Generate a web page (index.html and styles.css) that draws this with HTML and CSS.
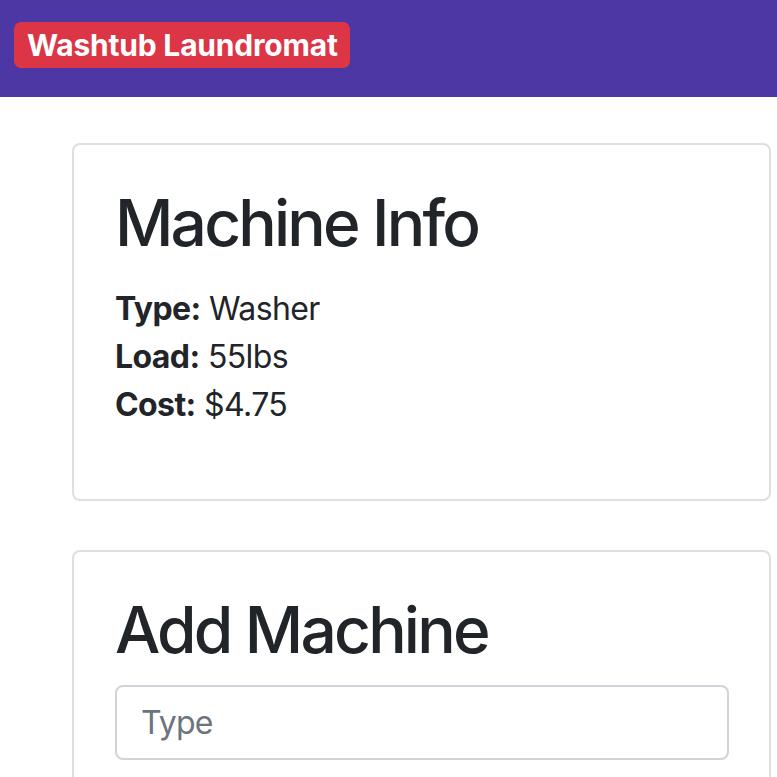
FILE: index.html
```html
<!DOCTYPE html>
<html>
<head>
<meta charset="utf-8">
<link rel="stylesheet" href="styles.css">
</head>
<body>
<nav class="navbar">
  <span class="brand">Washtub Laundromat</span>
</nav>
<main class="main">
  <section class="card">
    <h1 class="title">Machine Info</h1>
    <p class="info">
      <span class="row"><b>Type:</b> Washer</span>
      <span class="row"><b>Load:</b> 55lbs</span>
      <span class="row"><b>Cost:</b> $4.75</span>
    </p>
  </section>
  <section class="card">
    <h1 class="title">Add Machine</h1>
    <input class="field" type="text" placeholder="Type">
  </section>
</main>
</body>
</html>
```
FILE: styles.css
```css
* { box-sizing: border-box; }
html, body { margin: 0; padding: 0; }
body {
  font-family: Inter, "Noto Sans", sans-serif;
  color: #212529;
  background: #fff;
  font-size: 32px;
  line-height: 1.5;
  overflow: hidden;
}
.navbar {
  height: 97px;
  background: #4c37a5;
  display: flex;
  align-items: flex-start;
  padding: 22px 14px 0;
}
.brand {
  display: inline-flex;
  align-items: center;
  height: 46px;
  padding: 0 12px 0 13px;
  background: #dc3545;
  color: #fff;
  font-weight: 700;
  font-size: 30px;
  letter-spacing: -0.2px;
  border-radius: 7px;
  line-height: 1;
}
.main {
  padding: 46px 6px 0 72px;
  display: flex;
  flex-direction: column;
  gap: 49px;
}
.card {
  border: 2px solid #dfdfdf;
  border-radius: 8px;
  padding: 40px 40px 40px 41px;
}
.title {
  margin: 0 0 16px;
  font-size: 64px;
  font-weight: 500;
  line-height: 1.2;
  letter-spacing: -2.8px;
}
.info {
  margin: 0 0 30px;
  padding-top: 7px;
  letter-spacing: -0.6px;
}
.row { display: block; }
.row b { font-weight: 700; }
.field {
  display: block;
  width: 614px;
  height: 75px;
  border: 2px solid #ced4da;
  border-radius: 8px;
  padding: 12px 24px;
  font-family: inherit;
  font-size: 32px;
  letter-spacing: -0.8px;
  color: #495057;
}
.field::placeholder { color: #6c757d; }
```
